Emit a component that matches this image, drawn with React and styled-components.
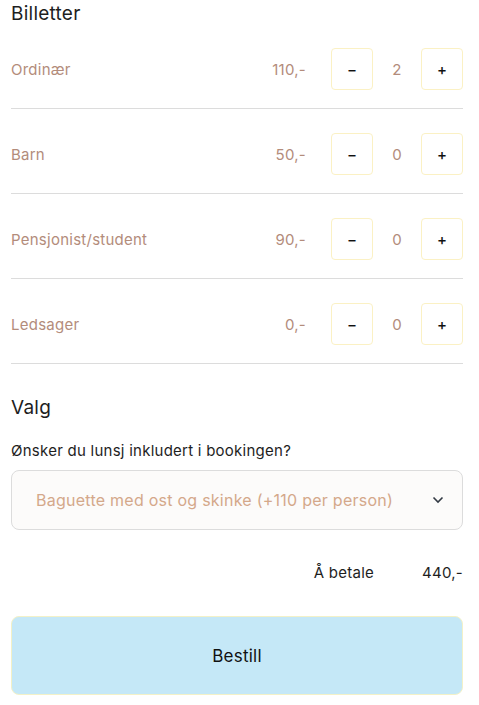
import React from "react";
import styled, { createGlobalStyle } from "styled-components";

const Global = createGlobalStyle`
  html, body { margin: 0; padding: 0; background: #fff; }
  body { font-family: "Inter", "Noto Sans", sans-serif; letter-spacing: 0.25px; }
`;

const Page = styled.div`
  padding: 0 16px 0 11px;
  width: 452px;
`;

const Heading = styled.h2`
  margin: 0;
  font-size: 19px;
  font-weight: 400;
  line-height: 28px;
  color: #1e1e1e;
`;

const Row = styled.div`
  display: flex;
  align-items: center;
  padding: 20px 0 18px;
  border-bottom: 1px solid #dcdcdc;
  & + & { padding-top: 24px; }
`;

const Label = styled.span`
  flex: 1;
  font-size: 15px;
  color: #b38c7b;
`;

const Price = styled.span`
  font-size: 15px;
  color: #b38c7b;
  margin-right: 25px;
`;

const StepBtn = styled.button`
  width: 42px;
  height: 42px;
  box-sizing: border-box;
  border: 1px solid #fbf1c4;
  border-radius: 4px;
  background: #fff;
  font-family: inherit;
  font-size: 15px;
  font-weight: 500;
  color: #111;
  display: flex;
  align-items: center;
  justify-content: center;
  padding: 0;
`;

const Count = styled.span`
  width: 48px;
  text-align: center;
  font-size: 15px;
  color: #b38c7b;
`;

const Section = styled.div`
  margin-top: 30px;
`;

const Question = styled.p`
  margin: 19px 0 10px;
  font-size: 15px;
  color: #1e1e1e;
`;

const Select = styled.div`
  display: flex;
  align-items: center;
  justify-content: space-between;
  height: 60px;
  box-sizing: border-box;
  padding: 0 18px 0 24px;
  border: 1px solid #dcdcdc;
  border-radius: 8px;
  background: #fcfbfa;
  font-size: 16px;
  color: #d4a88a;
`;

const Total = styled.div`
  display: flex;
  justify-content: flex-end;
  align-items: center;
  margin-top: 33px;
  font-size: 15px;
  color: #1e1e1e;
`;

const TotalLabel = styled.span`
  margin-right: 48px;
`;

const Submit = styled.button`
  display: block;
  width: 100%;
  height: 79px;
  margin-top: 34px;
  box-sizing: border-box;
  border: 1px solid #f3f1c8;
  border-radius: 8px;
  background: #c5e8f7;
  font-family: inherit;
  letter-spacing: inherit;
  font-size: 17px;
  color: #111;
`;

const tickets = [
  { name: "Ordinær", price: "110,-", count: 2 },
  { name: "Barn", price: "50,-", count: 0 },
  { name: "Pensjonist/student", price: "90,-", count: 0 },
  { name: "Ledsager", price: "0,-", count: 0 },
];

export default function App() {
  return (
    <>
      <Global />
      <Page>
        <Heading>Billetter</Heading>
        {tickets.map((t) => (
          <Row key={t.name}>
            <Label>{t.name}</Label>
            <Price>{t.price}</Price>
            <StepBtn>−</StepBtn>
            <Count>{t.count}</Count>
            <StepBtn>+</StepBtn>
          </Row>
        ))}
        <Section>
          <Heading>Valg</Heading>
          <Question>Ønsker du lunsj inkludert i bookingen?</Question>
          <Select>
            <span>Baguette med ost og skinke (+110 per person)</span>
            <svg width="12" height="8" viewBox="0 0 12 8" fill="none">
              <path d="M1.5 1.5 L6 6 L10.5 1.5" stroke="#333a44" strokeWidth="1.6" />
            </svg>
          </Select>
        </Section>
        <Total>
          <TotalLabel>Å betale</TotalLabel>
          <span>440,-</span>
        </Total>
        <Submit>Bestill</Submit>
      </Page>
    </>
  );
}
